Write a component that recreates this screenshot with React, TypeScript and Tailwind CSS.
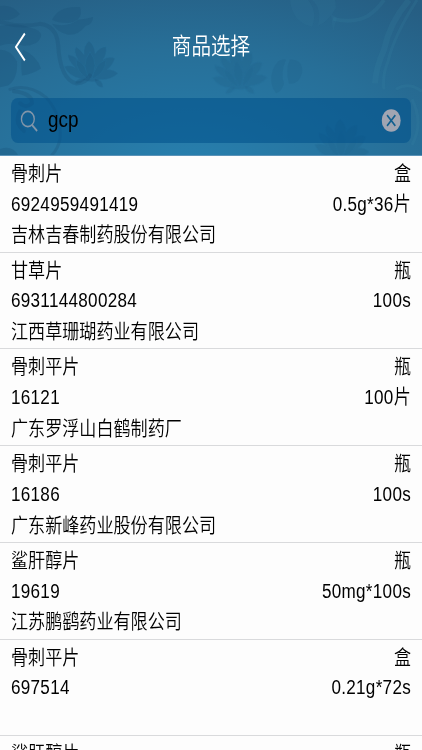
const items = [
  { name: "骨刺片", unit: "盒", code: "6924959491419", spec: "0.5g*36片", maker: "吉林吉春制药股份有限公司" },
  { name: "甘草片", unit: "瓶", code: "6931144800284", spec: "100s", maker: "江西草珊瑚药业有限公司" },
  { name: "骨刺平片", unit: "瓶", code: "16121", spec: "100片", maker: "广东罗浮山白鹤制药厂" },
  { name: "骨刺平片", unit: "瓶", code: "16186", spec: "100s", maker: "广东新峰药业股份有限公司" },
  { name: "鲨肝醇片", unit: "瓶", code: "19619", spec: "50mg*100s", maker: "江苏鹏鹞药业有限公司" },
  { name: "骨刺平片", unit: "盒", code: "697514", spec: "0.21g*72s", maker: "" },
  { name: "鲨肝醇片", unit: "瓶", code: "", spec: "", maker: "" },
];

function Flower({ x, y, r = 0 }: { x: number; y: number; r?: number }) {
  return (
    <g transform={`translate(${x} ${y}) rotate(${r})`} strokeWidth="1" stroke="#26709a" strokeOpacity="0.4">
      <path d="M-10 15Q-21 13 -26 3Q-19 1 -15 4Q-23 -4 -22 -9Q-16 -8 -12 -4Q-17 -12 -14 -17Q-9 -14 -6 -9Q-7 -18 -1 -23Q5 -18 5 -10Q10 -17 16 -17Q17 -9 13 -4Q20 -8 25 -5Q22 3 17 6Q24 6 28 10Q20 17 10 16Q3 21 -10 15Z" />
      <g fillOpacity="0.1">
        <path d="M-2 16Q-14 8 -14 -4Q-3 0 -2 16Z" />
        <path d="M0 16Q-10 2 0 -12Q10 2 0 16Z" />
        <path d="M2 16Q5 0 16 -4Q16 9 2 16Z" />
      </g>
      <path d="M-4 15Q-10 22 -15 20Q-13 14 -4 15Z" />
      <path d="M4 15Q6 24 13 24Q13 16 4 15Z" />
    </g>
  );
}

function Floral() {
  return (
    <svg viewBox="0 0 422 156" preserveAspectRatio="none" className="absolute inset-0 h-full w-full">
      {/* leaves and blossoms */}
      <g fill="#174c72" fillOpacity="0.26">
        <Flower x={90} y={64} />
        <g opacity="0.55">
          <Flower x={238} y={72} r={-8} />
          <Flower x={341} y={143} />
        </g>
        <path d="M52 20Q58 6 80 7Q84 20 70 23Q60 24 52 20Z" />
        <path d="M52 24Q68 28 78 20Q86 19 93 17Q93 24 86 26Q78 36 68 35Q58 33 52 24Z" />
        <path d="M0 6Q12 4 20 14Q12 22 0 20Z" />
        <path d="M0 26Q18 22 30 28Q42 30 41 37Q38 46 24 46Q10 42 0 46Z" />
        <path d="M0 50Q11 50 17 62Q18 80 8 86L0 88Z" />
        <path d="M23 50Q37 56 41 69Q32 75 22 76Q20 62 23 50Z" />
        <path d="M0 150Q12 146 18 156H0Z" />
        <path opacity="0.5" d="M290 60Q304 60 302 74Q298 86 289 84Q285 70 290 60ZM273 70Q278 58 286 60Q280 74 284 84Q282 92 276 94Q268 84 273 70Z" />
      </g>
      {/* dark vines */}
      <g fill="none" stroke="#174c72" strokeOpacity="0.24" strokeLinecap="round">
        <path strokeWidth="4" d="M0 22Q20 28 40 24Q56 26 58 44Q60 80 76 84Q86 84 90 76" />
        <path strokeWidth="3" d="M10 90Q28 84 46 98Q62 116 60 140Q58 150 52 156" />
        <path strokeWidth="4" d="M14 92Q32 94 32 104Q26 110 20 104M20 112Q14 124 24 132" />
      </g>
      {/* light vines */}
      <g fill="none" stroke="#3a87a8" strokeOpacity="0.17">
        <path strokeWidth="4" d="M333 19Q354 24 368 16Q378 9 384 0" />
        <path strokeWidth="6" d="M409 0Q390 22 384 50Q376 68 375 84" />
        <path strokeWidth="3" d="M417 0Q394 36 388 62Q382 76 384 90" />
        <path strokeWidth="3" d="M396 90Q408 82 422 92M412 100Q424 124 412 146" />
      </g>
      <path fill="#3a87a8" fillOpacity="0.12" d="M290 0Q292 22 312 27Q318 12 308 0ZM312 0Q322 8 318 26Q328 22 336 8L335 0ZM331 14L333 32L337 18Z" />
    </svg>
  );
}

export default function App() {
  return (
    <div className="h-[750px] w-[422px] overflow-hidden bg-[#fdfdfd]">
      {/* layout is 500 wide, squeezed horizontally to the screen */}
      <div className="h-[750px] w-[500px] origin-top-left scale-x-[0.844] font-['Liberation_Sans','Noto_Sans_CJK_SC',sans-serif] text-[20.25px] text-black">
        <header className="relative h-[155.9px] border-b border-[#5b93b8] bg-[radial-gradient(ellipse_90%_130%_at_45%_110%,#2780af_0%,#276f98_60%,#265e83_100%)]">
          <Floral />
          <div className="relative flex h-[98px] items-center px-[17px] pb-[4px]">
            <svg viewBox="0 0 14 30" className="h-[30px] w-[14px]" fill="none" stroke="#fff" strokeWidth="2.1">
              <path d="M12.4 1.5L1.8 15L12.4 28.5" />
            </svg>
            <h1 className="flex-1 pr-[14px] text-center text-[23.2px] leading-none font-[350] text-white">商品选择</h1>
          </div>
          <div className="relative mx-[13px] flex h-[45px] items-center rounded-lg bg-[#00508a]/55 pr-3 pl-[11px]">
            <svg viewBox="0 0 21 22" className="h-[22px] w-[21px]" fill="none" stroke="#8296a9" strokeWidth="1.6">
              <circle cx="9" cy="9" r="7.6" />
              <path strokeWidth="2" d="M14 15L20 21" />
            </svg>
            <span className="ml-3 flex-1 text-[22.4px] leading-none">gcp</span>
            <svg viewBox="0 0 23 23" className="h-[23px] w-[23px]">
              <circle cx="11.5" cy="11.5" r="11.3" fill="#a1a5b2" />
              <path d="M6.6 6.2L16.4 16.8M16.4 6.2L6.6 16.8" stroke="#125f8f" strokeWidth="1.9" />
            </svg>
          </div>
        </header>
        <ul>
          {items.map((item, i) => (
            <li key={i} className="h-[96.75px] border-b border-[#d9dadc] px-[13px] pt-[3.1px] font-[350]">
              <div className="flex justify-between leading-[30.7px]">
                <span>{item.name}</span>
                <span>{item.unit}</span>
              </div>
              <div className="flex h-[29.7px] justify-between leading-[29.7px] tracking-[0.35px]">
                <span>{item.code}</span>
                <span>{item.spec}</span>
              </div>
              <div className="leading-[32.7px]">{item.maker}</div>
            </li>
          ))}
        </ul>
      </div>
    </div>
  );
}
